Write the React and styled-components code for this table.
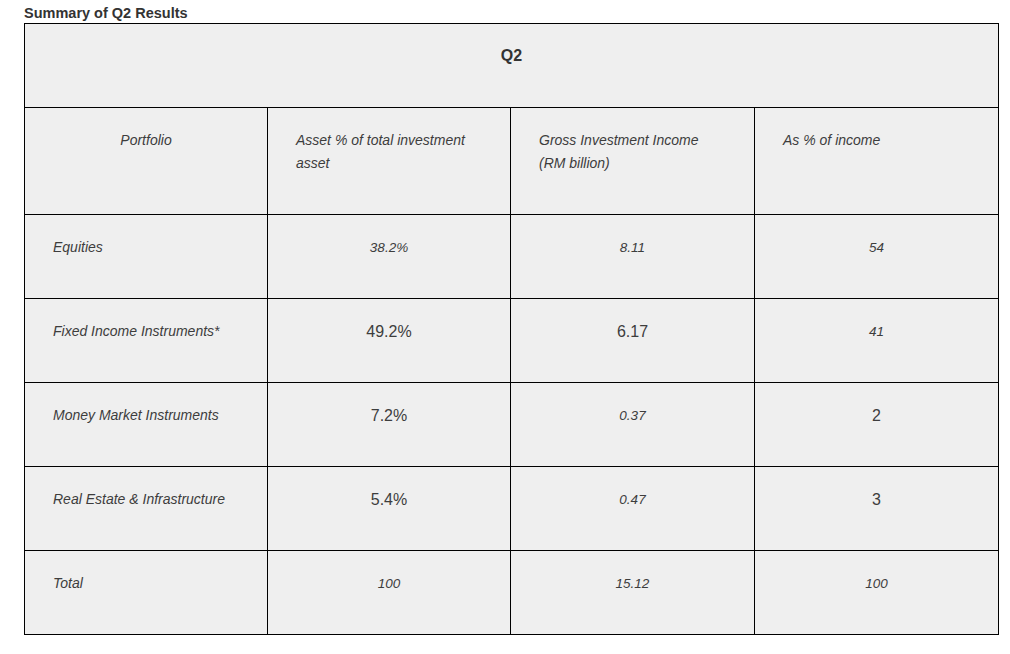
import React from 'react';
import styled, { createGlobalStyle } from 'styled-components';

const GlobalStyle = createGlobalStyle`
  body {
    margin: 0;
    background: #fff;
    font-family: "Liberation Sans", Arial, sans-serif;
    color: #3a3a3a;
  }
`;

const Page = styled.div`
  padding: 4px 12px 0 24px;
`;

const Title = styled.h4`
  margin: 0 0 1px;
  font-size: 14.5px;
  line-height: 18px;
  font-weight: bold;
  color: #333;
`;

const Table = styled.table`
  width: 975px;
  border-collapse: collapse;
  table-layout: fixed;
  background: #efefef;
`;

const Row = styled.tr`
  height: ${(p) => p.$h || 84}px;
`;

const Cell = styled.td`
  border: 1px solid #000;
  vertical-align: top;
  padding: 21px 28px 0 28px;
  font-size: ${(p) => (p.$big ? 16 : p.$small ? 13.5 : 14)}px;
  line-height: 23px;
  font-style: ${(p) => (p.$plain ? 'normal' : 'italic')};
  text-align: ${(p) => (p.$center ? 'center' : 'left')};
  color: #3d3d3d;
`;

const HeadCell = styled(Cell)`
  padding-top: 20px;
  font-style: normal;
  font-weight: bold;
  font-size: 16px;
  color: #333;
`;

const rows = [
  { name: 'Equities', asset: ['38.2%'], gross: ['8.11'], pct: ['54'] },
  { name: 'Fixed Income Instruments*', asset: ['49.2%', true], gross: ['6.17', true], pct: ['41'] },
  { name: 'Money Market Instruments', asset: ['7.2%', true], gross: ['0.37'], pct: ['2', true] },
  { name: 'Real Estate & Infrastructure', asset: ['5.4%', true], gross: ['0.47'], pct: ['3', true] },
  { name: 'Total', asset: ['100'], gross: ['15.12'], pct: ['100'] },
];

function Value({ v }) {
  const [text, big] = v;
  return (
    <Cell $center $big={big} $plain={big} $small={!big}>
      {text}
    </Cell>
  );
}

export default function App() {
  return (
    <Page>
      <GlobalStyle />
      <Title>Summary of Q2 Results</Title>
      <Table>
        <colgroup>
          <col style={{ width: 243 }} />
          <col style={{ width: 243 }} />
          <col style={{ width: 244 }} />
          <col style={{ width: 244 }} />
        </colgroup>
        <tbody>
          <Row>
            <HeadCell colSpan={4} $center>Q2</HeadCell>
          </Row>
          <Row $h={107}>
            <Cell $center>Portfolio</Cell>
            <Cell>Asset % of total investment asset</Cell>
            <Cell>Gross Investment Income (RM billion)</Cell>
            <Cell>As % of income</Cell>
          </Row>
          {rows.map((r) => (
            <Row key={r.name}>
              <Cell>{r.name}</Cell>
              <Value v={r.asset} />
              <Value v={r.gross} />
              <Value v={r.pct} />
            </Row>
          ))}
        </tbody>
      </Table>
    </Page>
  );
}
